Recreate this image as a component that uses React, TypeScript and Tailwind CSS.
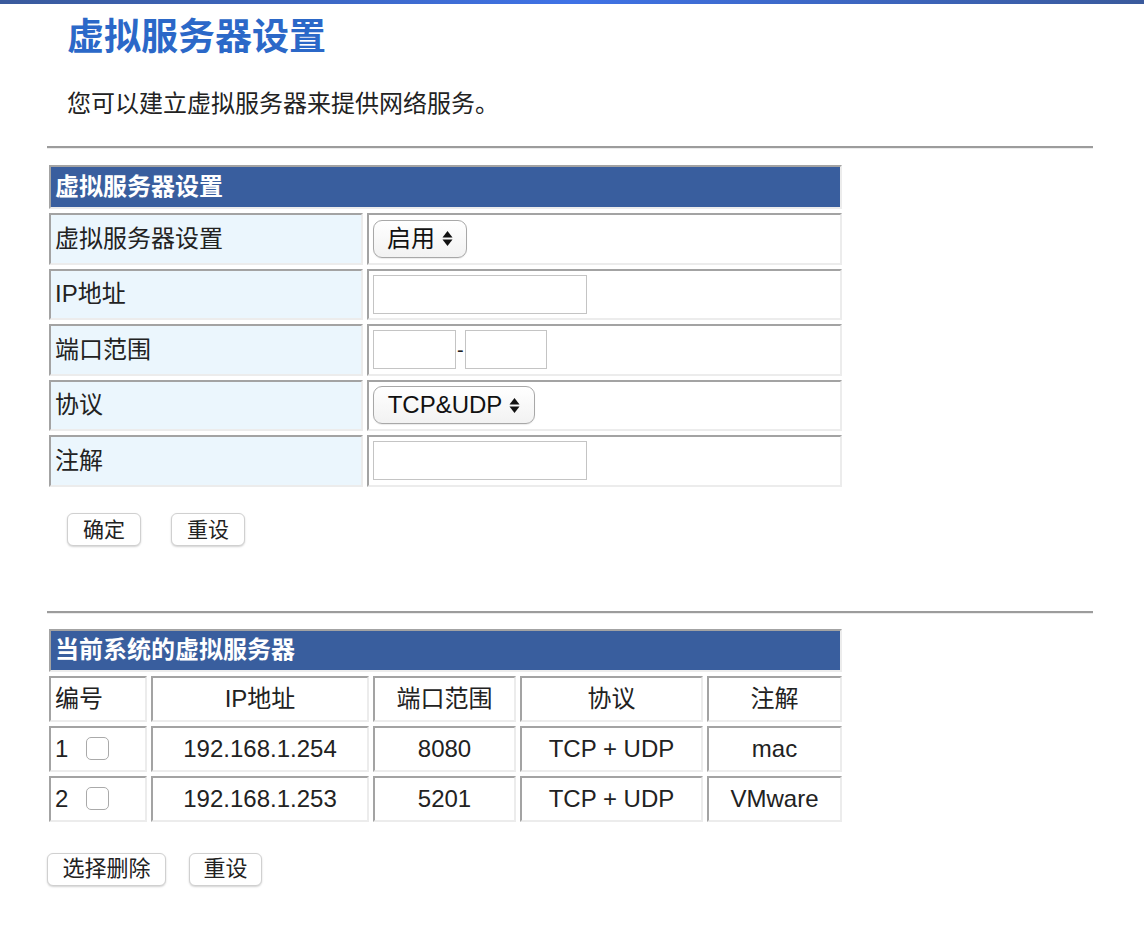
import React from "react";

const cell = "border-2 border-t-[#a3a3a3] border-l-[#a3a3a3] border-r-[#ececec] border-b-[#ececec]";

function UpDown() {
  return (
    <svg width="11" height="17" viewBox="0 0 11 17" className="ml-[7px]">
      <path d="M5.5 1 L10.5 7.5 L0.5 7.5 Z" fill="#111" />
      <path d="M5.5 16 L10.5 9.5 L0.5 9.5 Z" fill="#111" />
    </svg>
  );
}

function FakeSelect({ label, width }: { label: string; width: string }) {
  return (
    <div
      className={`flex items-center justify-center h-[38px] ${width} rounded-[9px] border border-[#a8a8a8] bg-gradient-to-b from-white to-[#f2f2f2] text-[24px] text-[#111] shadow-[0_1px_1px_rgba(0,0,0,0.08)]`}
    >
      <span>{label}</span>
      <UpDown />
    </div>
  );
}

function Btn({ children, w, size }: { children: React.ReactNode; w: string; size: string }) {
  return (
    <button
      className={`h-[33px] ${w} ${size} rounded-[6px] border border-[#d0d0d0] bg-white text-[#222] shadow-[0_1px_2px_rgba(0,0,0,0.18)] leading-none`}
    >
      {children}
    </button>
  );
}

function Hr() {
  return <div className="w-[1046px] h-[3px] border-t-2 border-[#9c9c9c] border-b border-b-[#ececec]" />;
}

const rows = [
  { n: 1, ip: "192.168.1.254", port: "8080", proto: "TCP + UDP", note: "mac" },
  { n: 2, ip: "192.168.1.253", port: "5201", proto: "TCP + UDP", note: "VMware" },
];

export default function App() {
  return (
    <div className="min-h-[942px] bg-white font-['Liberation_Sans','Noto_Sans_CJK_SC',sans-serif] text-[#222]">
      <div className="h-[4px] bg-gradient-to-r from-[#3a5a9c] via-[#3f72e6] to-[#3a5a9c]" />

      <div className="pl-[47px]">
        <h1 className="mt-[12px] ml-[20px] h-[44px] leading-[44px] text-[37px] font-bold text-[#2b68c8]">
          虚拟服务器设置
        </h1>
        <p className="mt-[29px] ml-[20px] leading-[30px] text-[24px] text-[#222]">
          您可以建立虚拟服务器来提供网络服务。
        </p>

        <div className="mt-[27px]">
          <Hr />
        </div>

        {/* settings table */}
        <table className="mt-[12px] -ml-[2px] w-[801px] border-separate border-spacing-[4px] text-[24px]">
          <tbody>
            <tr>
              <td colSpan={2} className={`${cell} h-[44px] bg-[#395e9e] px-[4px] font-bold text-white`}>
                虚拟服务器设置
              </td>
            </tr>
            {[
              {
                label: "虚拟服务器设置",
                body: <FakeSelect label="启用" width="w-[94px]" />,
              },
              {
                label: "IP地址",
                body: <input className="block h-[39px] w-[214px] border border-[#c4c4c4] bg-white" />,
              },
              {
                label: "端口范围",
                body: (
                  <div className="flex items-center">
                    <input className="block h-[39px] w-[83px] border border-[#c4c4c4] bg-white" />
                    <span className="px-[1px] text-[20px]">-</span>
                    <input className="block h-[39px] w-[82px] border border-[#c4c4c4] bg-white" />
                  </div>
                ),
              },
              {
                label: "协议",
                body: <FakeSelect label="TCP&UDP" width="w-[162px]" />,
              },
              {
                label: "注解",
                body: <input className="block h-[39px] w-[214px] border border-[#c4c4c4] bg-white" />,
              },
            ].map((r) => (
              <tr key={r.label}>
                <td className={`${cell} h-[51.5px] w-[314px] bg-[#ebf6fd] px-[4px]`}>{r.label}</td>
                <td className={`${cell} h-[51.5px] bg-white px-[4px]`}>{r.body}</td>
              </tr>
            ))}
          </tbody>
        </table>

        <div className="mt-[22px] ml-[20px] flex gap-[30px]">
          <Btn w="w-[74px]" size="text-[21px]">确定</Btn>
          <Btn w="w-[74px]" size="text-[21px]">重设</Btn>
        </div>

        <div className="mt-[65px]">
          <Hr />
        </div>

        {/* current list */}
        <table className="mt-[11px] -ml-[2px] w-[801px] border-separate border-spacing-[4px] text-[24px]">
          <tbody>
            <tr>
              <td colSpan={5} className={`${cell} h-[43px] bg-[#395e9e] px-[4px] font-bold text-white`}>
                当前系统的虚拟服务器
              </td>
            </tr>
            <tr className="text-center">
              <td className={`${cell} h-[46px] w-[98px] px-[4px] text-left`}>编号</td>
              <td className={`${cell} w-[218px]`}>IP地址</td>
              <td className={`${cell} w-[143px]`}>端口范围</td>
              <td className={`${cell} w-[183px]`}>协议</td>
              <td className={cell}>注解</td>
            </tr>
            {rows.map((r) => (
              <tr key={r.n} className="text-center">
                <td className={`${cell} h-[46px] px-[4px] text-left`}>
                  <div className="flex items-center">
                    <span>{r.n}</span>
                    <span className="ml-[18px] inline-block h-[23px] w-[23px] rounded-[5px] border border-[#aaa] bg-white" />
                  </div>
                </td>
                <td className={cell}>{r.ip}</td>
                <td className={cell}>{r.port}</td>
                <td className={cell}>{r.proto}</td>
                <td className={cell}>{r.note}</td>
              </tr>
            ))}
          </tbody>
        </table>

        <div className="mt-[27px] flex gap-[23px]">
          <Btn w="w-[119px]" size="text-[22px]">选择删除</Btn>
          <Btn w="w-[73px]" size="text-[22px]">重设</Btn>
        </div>
      </div>
    </div>
  );
}
